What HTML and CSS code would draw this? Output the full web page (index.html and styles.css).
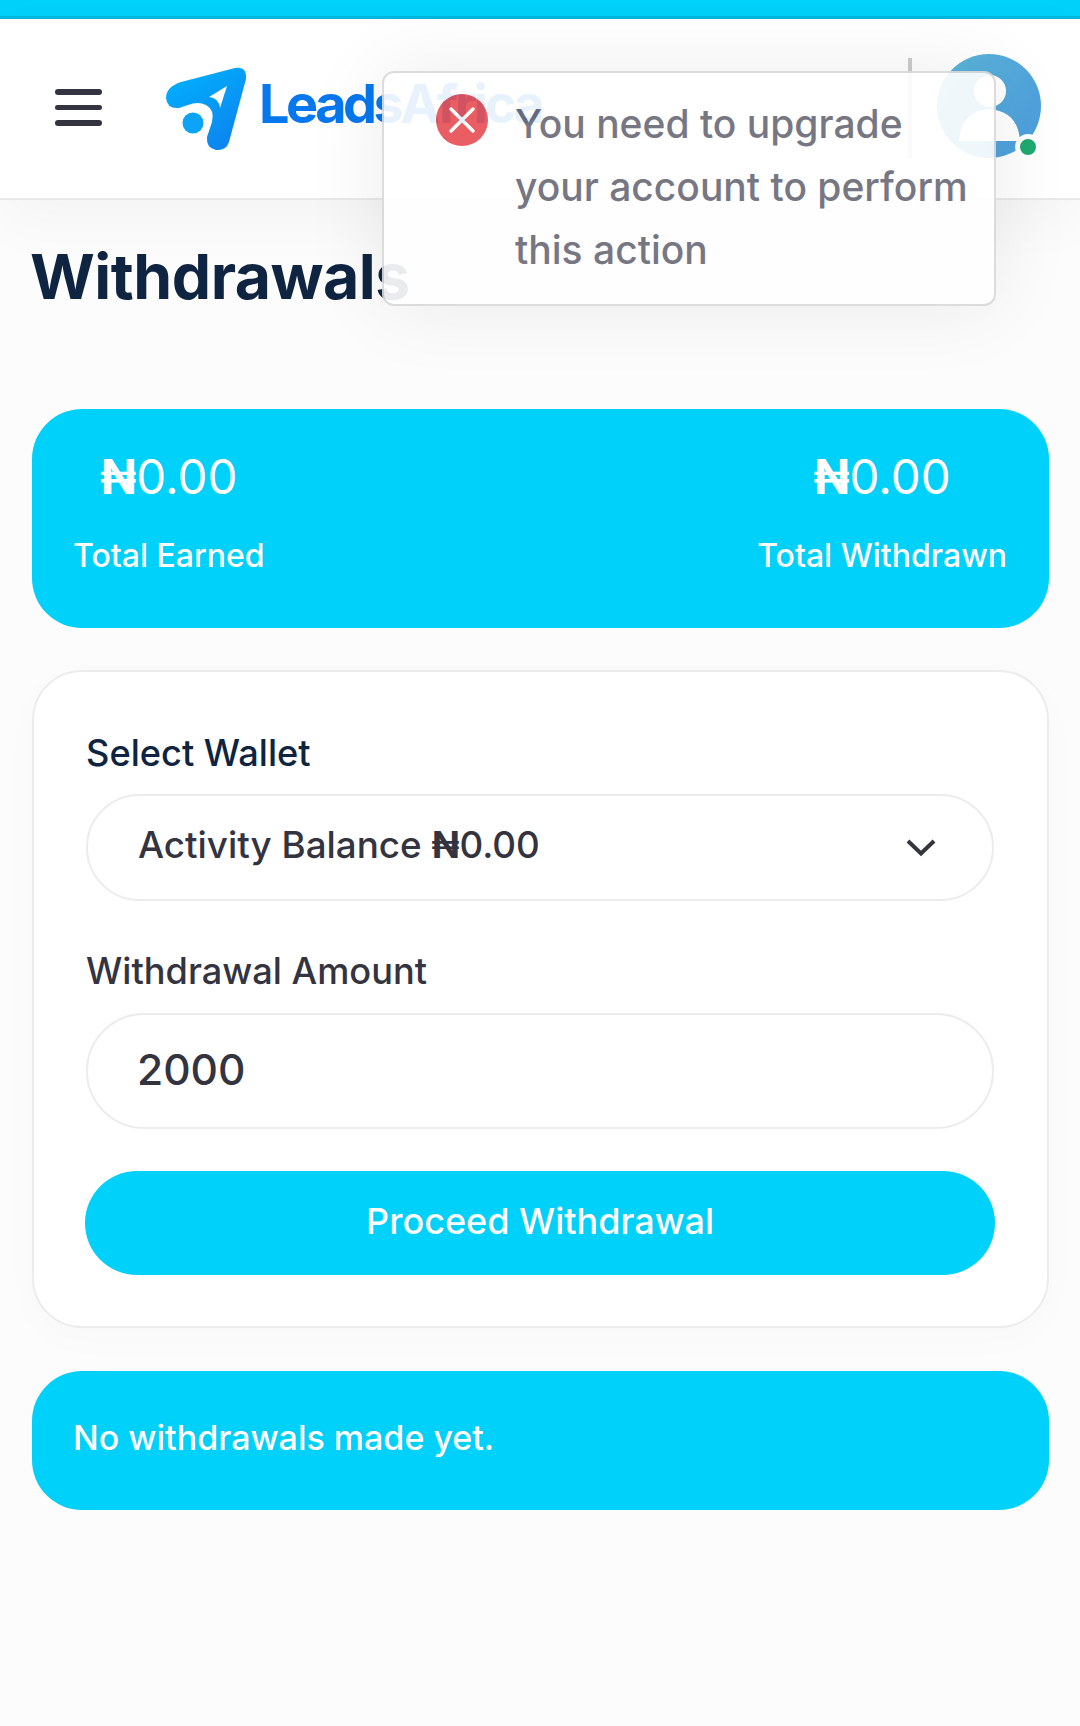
FILE: index.html
```html
<!DOCTYPE html>
<html lang="en">
<head>
<meta charset="utf-8">
<title>Withdrawals</title>
<link rel="stylesheet" href="styles.css">
</head>
<body>
<div class="topbar"></div>
<header class="header">
  <button class="burger" aria-label="Menu"><span></span><span></span><span></span></button>
  <div class="logo">
    <svg class="logo-mark" viewBox="158 66 82 86" width="82" height="86" aria-hidden="true">
      <defs><linearGradient id="lg" x1="0" y1="0" x2="0.6" y2="1"><stop offset="0" stop-color="#00b4ff"/><stop offset="1" stop-color="#0c86f0"/></linearGradient></defs>
      <path fill="url(#lg)" d="M174 82 L228 68 Q240 66 239 79 L222 142 Q219 151 209 150 Q199 148 200 137 L205 122 Q208 110 199 105 Q191 101 181 105 L172 108 Q160 109 159 98 Q159 87 174 82 Z"/>
      <path fill="#fff" d="M220 86 L213 108 Q212 98 202 97 Z"/>
      <circle cx="186" cy="123" r="10.500" fill="#0ba4f8"/>
    </svg>
    <span class="logo-text">LeadsAfrica</span>
  </div>
  <div class="divider"></div>
  <div class="avatar">
    <svg viewBox="0 0 104 104" width="104" height="104" aria-hidden="true">
      <defs>
        <clipPath id="ac"><circle cx="52" cy="52" r="52"/></clipPath>
        <linearGradient id="ag" x1="0" y1="0" x2="1" y2="0.6"><stop offset="0" stop-color="#5cb8d8"/><stop offset="1" stop-color="#4e9fdc"/></linearGradient>
      </defs>
      <circle cx="52" cy="52" r="52" fill="url(#ag)"/>
      <g clip-path="url(#ac)" fill="#fff"><circle cx="53" cy="37" r="16"/><path d="M22 87 Q24 57 52 55 Q81 57 83 87 Z"/></g>
    </svg>
    <span class="online"></span>
  </div>
</header>

<main class="main">
  <h1 class="title">Withdrawals</h1>

  <section class="stats">
    <div class="stat">
      <div class="stat-value"><b class="naira">₦</b>0.00</div>
      <div class="stat-label">Total Earned</div>
    </div>
    <div class="stat">
      <div class="stat-value"><b class="naira">₦</b>0.00</div>
      <div class="stat-label">Total Withdrawn</div>
    </div>
  </section>

  <form class="form-card">
    <label class="label label-dark">Select Wallet</label>
    <div class="select">
      <span>Activity Balance <b class="naira">₦</b>0.00</span>
      <svg viewBox="0 0 30 20" width="30" height="20" aria-hidden="true"><path d="M2 3 L15 15.500 L28 3" fill="none" stroke="#33363c" stroke-width="4"/></svg>
    </div>
    <label class="label label-amount" for="amt">Withdrawal Amount</label>
    <input id="amt" class="amount" type="text" value="2000">
    <button class="proceed" type="button">Proceed Withdrawal</button>
  </form>

  <section class="notice">No withdrawals made yet.</section>
</main>

<div class="toast" role="alert">
  <span class="toast-icon">
    <svg viewBox="0 0 52 52" width="52" height="52" aria-hidden="true"><circle cx="26" cy="26" r="26" fill="#e64f54"/><path d="M15 15 L37 37 M37 15 L15 37" stroke="#fff" stroke-width="3.500" stroke-linecap="round"/></svg>
  </span>
  <p class="toast-text">You need to upgrade your account to perform this action</p>
</div>
</body>
</html>
```
FILE: styles.css
```css
* { box-sizing: border-box; }
html, body { margin: 0; }
body {
  height: 1726px;
  overflow: hidden;
  background: #fcfcfc;
  font-family: "Inter", "Noto Sans", sans-serif;
  color: #33343f;
  position: relative;
}
.topbar {
  height: 19px;
  background: #00d1fa;
  border-bottom: 3px solid #00b8dc;
}
.header {
  height: 181px;
  background: #fff;
  border-bottom: 2px solid #e9e9e9;
  box-shadow: 0 20px 60px rgba(0, 0, 0, .035);
  display: flex;
  align-items: center;
  padding: 0 39px 0 55px;
}
.burger {
  width: 47px;
  padding: 0;
  border: 0;
  background: none;
  display: flex;
  flex-direction: column;
  gap: 10px;
  margin-top: -2px;
}
.burger span {
  display: block;
  height: 5.500px;
  border-radius: 3px;
  background: #33343f;
}
.logo {
  display: flex;
  align-items: center;
  margin-left: 63px;
}
.logo-mark { display: block; }
.logo-text {
  margin-left: 12px;
  margin-top: -10px;
  font-size: 54px;
  font-weight: 700;
  letter-spacing: -3.500px;
  color: #0677ee;
  line-height: 1;
}
.divider {
  width: 4px;
  height: 100px;
  margin-left: auto;
  margin-right: 25px;
  margin-top: -2px;
  background: #ccc;
}
.avatar {
  position: relative;
  width: 104px;
  height: 104px;
  margin-top: -6px;
}
.avatar svg { display: block; }
.online {
  position: absolute;
  right: 0;
  bottom: -2px;
  width: 26px;
  height: 26px;
  border-radius: 50%;
  background: #1fa971;
  border: 5px solid #fff;
}
.main { padding: 0 31px 0 32px; }
.title {
  margin: 39px 0 96px -2px;
  font-size: 62.500px;
  line-height: 74px;
  font-weight: 700;
  letter-spacing: -.5px;
  color: #0e2440;
}
.stats {
  height: 219px;
  border-radius: 50px;
  background: #00d1fa;
  color: #fff;
  display: flex;
  justify-content: space-between;
  padding: 37px 42px 0 41px;
}
.stat { text-align: center; }
.stat-value { font-size: 47.500px; line-height: 62px; font-weight: 400; }
.stat-label { margin-top: 27px; font-size: 32px; line-height: 42px; font-weight: 500; }
.naira { font-weight: 700; }
.form-card {
  margin-top: 42px;
  height: 658px;
  background: #fff;
  border: 2px solid #ececec;
  border-radius: 50px;
  padding: 58px 53px 0 52px;
  display: flex;
  flex-direction: column;
  box-shadow: 0 10px 40px rgba(0, 0, 0, .02);
}
.label { font-size: 36.200px; line-height: 46px; font-weight: 500; }
.label-dark { color: #0e2440; }
.select {
  margin-top: 18px;
  height: 107px;
  border: 2px solid #ececec;
  border-radius: 54px;
  padding: 0 56px 6px 50px;
  display: flex;
  align-items: center;
  justify-content: space-between;
  font-size: 36.800px;
  font-weight: 500;
}
.select svg { margin-top: 6px; }
.label-amount { margin-top: 47px; }
.amount {
  margin-top: 19px;
  height: 116px;
  width: 100%;
  border: 2px solid #ececec;
  border-radius: 58px;
  background: #fff;
  padding: 0 49px 4px;
  font-family: inherit;
  font-size: 42.500px;
  font-weight: 500;
  color: #33343f;
  outline: none;
}
.proceed {
  margin: 42px -1px 0;
  height: 104px;
  border: 0;
  border-radius: 52px;
  background: #00d1fa;
  color: #fff;
  font-family: inherit;
  font-size: 36px;
  font-weight: 500;
  padding: 0 0 5px;
}
.notice {
  margin-top: 43px;
  height: 139px;
  border-radius: 50px;
  background: #00d1fa;
  color: #fff;
  display: flex;
  align-items: center;
  padding: 0 41px 6px;
  font-size: 34px;
  font-weight: 500;
}
.toast {
  position: absolute;
  left: 382px;
  top: 71px;
  width: 614px;
  height: 235px;
  display: flex;
  background: #fff;
  opacity: .91;
  border: 2px solid #d9d9d9;
  border-radius: 12px;
  box-shadow: 0 0 80px rgba(0, 0, 0, .08);
  padding: 20px 20px 0 52px;
}
.toast-icon { flex: none; margin-right: 27px; margin-top: 1px; }
.toast-icon svg { display: block; }
.toast-text {
  margin: -1px 0 0;
  font-size: 39px;
  line-height: 63px;
  font-weight: 500;
  color: #6a6a78;
}
```
